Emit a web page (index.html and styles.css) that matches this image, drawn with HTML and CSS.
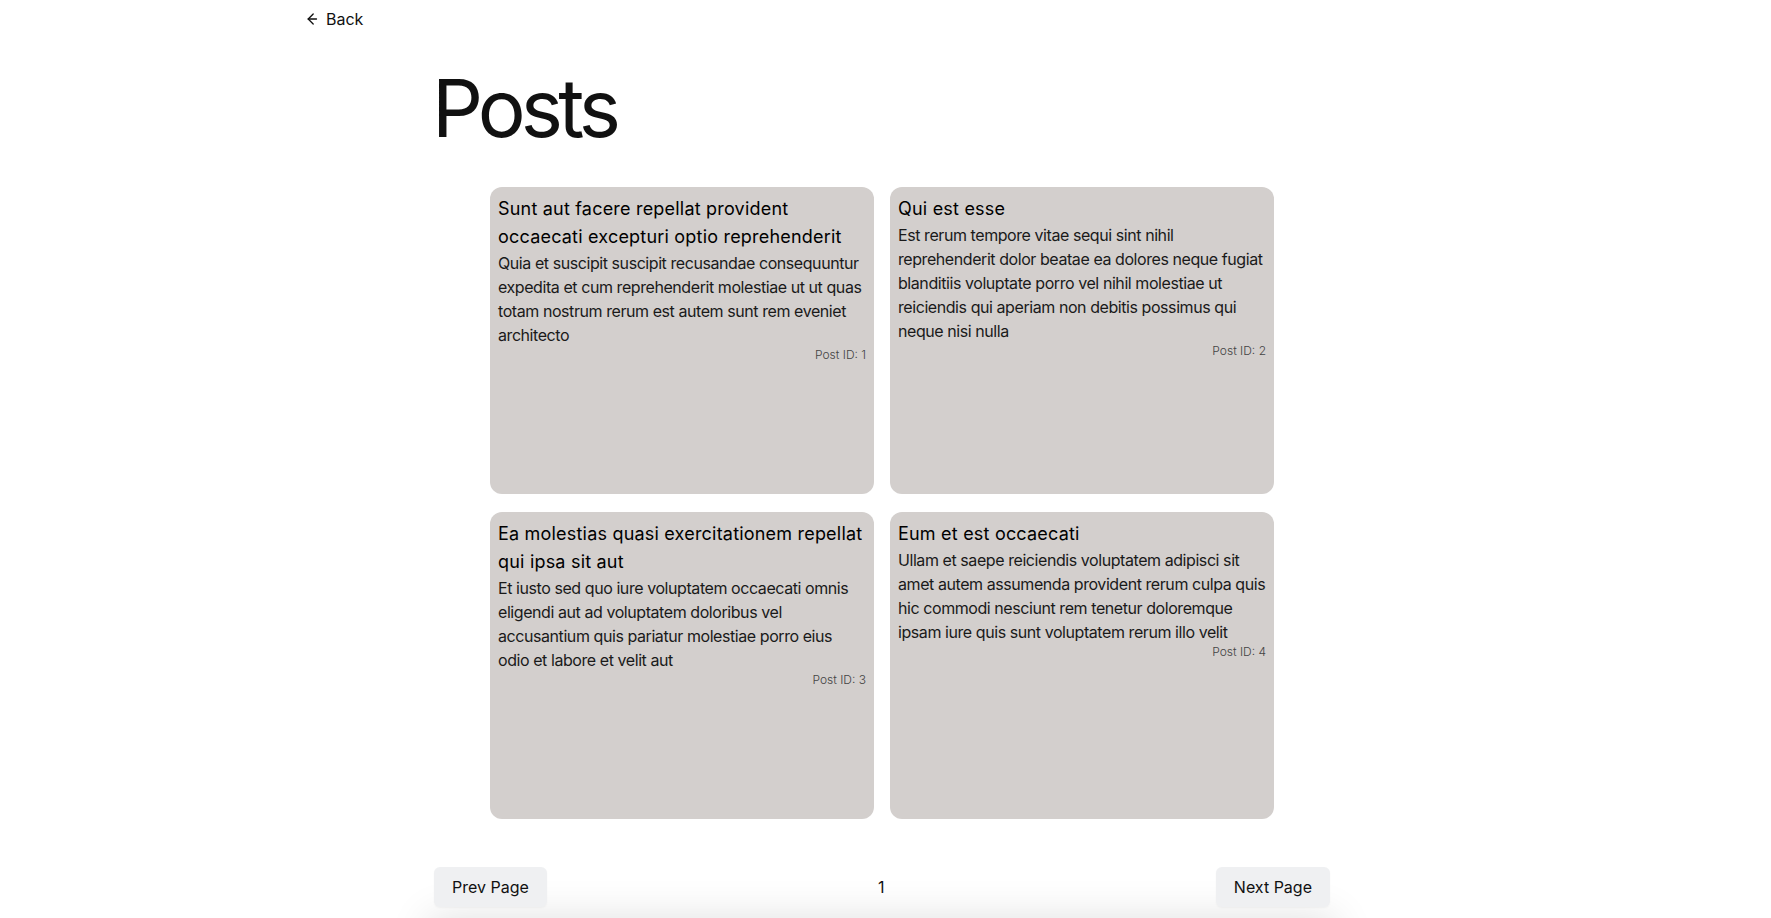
FILE: index.html
```html
<!DOCTYPE html>
<html lang="en">
  <head>
    <meta charset="UTF-8" />
    <meta name="viewport" content="width=device-width, initial-scale=1.0" />
    <title>Posts</title>
    <link rel="stylesheet" href="styles.css">
  </head>
  <body>
    <nav class="topbar">
      <a class="back" href="#">
        <svg width="12" height="14" viewBox="0 0 12 14" fill="none" stroke="currentColor" stroke-width="1.3" stroke-linecap="round" stroke-linejoin="round">
          <path d="M9.5 7H1.2" />
          <path d="M6.2 2L1.2 7L6.2 12" />
        </svg>
        Back
      </a>
    </nav>

    <main class="page">
      <h1 class="title">Posts</h1>

      <div class="posts">
        <div class="post">
          <h2>Sunt aut facere repellat provident occaecati excepturi optio reprehenderit</h2>
          <p>Quia et suscipit suscipit recusandae consequuntur expedita et cum reprehenderit molestiae ut ut quas totam nostrum rerum est autem sunt rem eveniet architecto</p>
          <div class="post-id">Post ID: 1</div>
        </div>
        <div class="post">
          <h2>Qui est esse</h2>
          <p>Est rerum tempore vitae sequi sint nihil reprehenderit dolor beatae ea dolores neque fugiat blanditiis voluptate porro vel nihil molestiae ut reiciendis qui aperiam non debitis possimus qui neque nisi nulla</p>
          <div class="post-id">Post ID: 2</div>
        </div>
        <div class="post">
          <h2>Ea molestias quasi exercitationem repellat qui ipsa sit aut</h2>
          <p>Et iusto sed quo iure voluptatem occaecati omnis eligendi aut ad voluptatem doloribus vel accusantium quis pariatur molestiae porro eius odio et labore et velit aut</p>
          <div class="post-id">Post ID: 3</div>
        </div>
        <div class="post">
          <h2>Eum et est occaecati</h2>
          <p>Ullam et saepe reiciendis voluptatem adipisci sit amet autem assumenda provident rerum culpa quis hic commodi nesciunt rem tenetur doloremque ipsam iure quis sunt voluptatem rerum illo velit</p>
          <div class="post-id">Post ID: 4</div>
        </div>
      </div>

      <div class="pagination">
        <button>Prev Page</button>
        <span class="page-num">1</span>
        <button>Next Page</button>
      </div>

      <div class="footer"></div>
    </main>
  </body>
</html>
```

FILE: styles.css
```css
body {
  font-family: Inter, "Noto Sans", sans-serif;
  color: #111;
  background-color: white;
  margin: 0;
  padding: 0 7px 0 0;
}

.topbar {
  max-width: 1150px;
  margin: 0 auto;
  padding-top: 7px;
}

.back {
  display: inline-flex;
  align-items: center;
  gap: 7px;
  color: #111;
  text-decoration: none;
  font-size: 16px;
  line-height: 24px;
}

.page {
  max-width: 896px;
  margin: 0 auto;
}

.title {
  font-size: 80px;
  font-weight: 400;
  line-height: 1;
  margin: 37px 0 39px -2px;
  letter-spacing: -4.9px;
}

.posts {
  display: grid;
  grid-template-columns: repeat(2, 384px);
  column-gap: 16px;
  row-gap: 18px;
  justify-content: center;
}

.post {
  background-color: #d3cfcd;
  border-radius: 12px;
  padding: 8px;
  height: 307px;
  box-sizing: border-box;
}

.post h2 {
  font-size: 18px;
  line-height: 28px;
  font-weight: 400;
  letter-spacing: 0.2px;
  margin: 0;
  color: #000;
}

.post p {
  font-size: 16px;
  line-height: 24px;
  letter-spacing: -0.43px;
  margin: 0;
  color: #1a1a1a;
}

.post-id {
  text-align: right;
  font-size: 12px;
  line-height: 16px;
  font-weight: 300;
  color: #444;
}

.pagination {
  display: flex;
  justify-content: space-between;
  align-items: center;
  margin-top: 48px;
}

.pagination button {
  font-family: inherit;
  font-size: 16px;
  color: #111;
  background-color: #eff0f2;
  border: none;
  border-radius: 6px;
  padding: 0 18px;
  height: 40px;
  box-shadow: 0 1px 2px rgba(0, 0, 0, 0.04);
}

.page-num {
  font-size: 16px;
}

.footer {
  height: 60px;
  margin-top: 16px;
  background-color: white;
  box-shadow: 0 0 40px 6px rgba(0, 0, 0, 0.12);
}
```
